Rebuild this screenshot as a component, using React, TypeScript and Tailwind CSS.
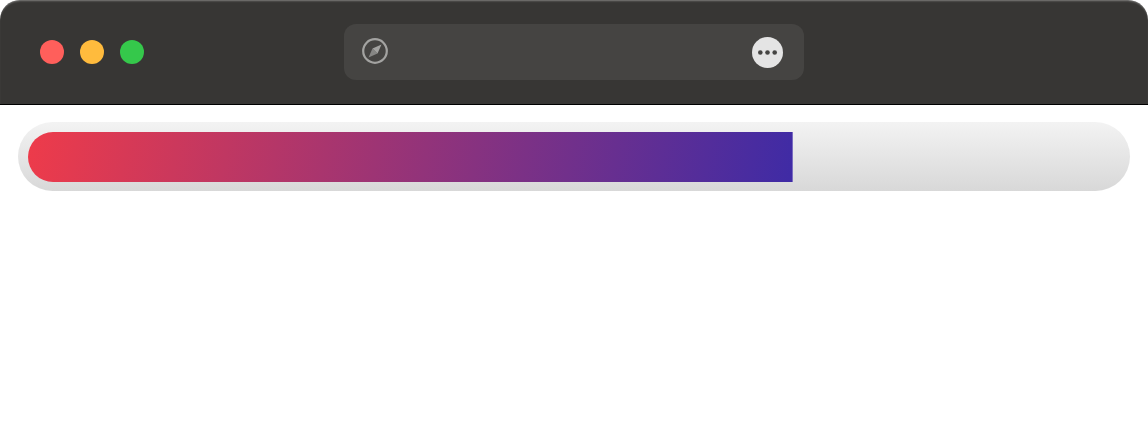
const progress = 70;

const SafariBar = () => {
  return (
    <div className="flex h-[105px] items-center rounded-t-[20px] border-b border-black bg-[#373634] pl-10 shadow-[inset_0_2px_2px_-1px_rgba(255,255,255,0.35)]">
      <div className="flex w-[304px] gap-4">
        <span className="size-6 rounded-full bg-[#ff5f5b]" />
        <span className="size-6 rounded-full bg-[#ffbb3d]" />
        <span className="size-6 rounded-full bg-[#35c84b]" />
      </div>
      <div className="flex h-14 w-[460px] items-center justify-between rounded-xl bg-[#454442] pl-[18px] pr-[21px]">
        <svg className="mb-[2px]" width="26" height="26" viewBox="0 0 26 26" fill="none">
          <circle cx="13" cy="13" r="11.8" stroke="#a3a3a1" strokeWidth="2.2" />
          <path d="M19.5 6.5 L15.5 15.5 L10.5 10.5 Z" fill="#a3a3a1" />
          <path d="M6.5 19.5 L10.5 10.5 L15.5 15.5 Z" fill="#a3a3a1" opacity="0.7" />
        </svg>
        <svg width="31" height="31" viewBox="0 0 31 31">
          <circle cx="15.5" cy="15.5" r="15.5" fill="#e4e4e4" />
          <circle cx="8.3" cy="15.5" r="2.3" fill="#454442" />
          <circle cx="15.5" cy="15.5" r="2.3" fill="#454442" />
          <circle cx="22.7" cy="15.5" r="2.3" fill="#454442" />
        </svg>
      </div>
    </div>
  );
};

const App = () => {
  return (
    <div className="h-[448px] w-[1148px] overflow-hidden bg-white font-['Liberation_Sans',sans-serif]">
      <SafariBar />
      <div className="mx-[18px] mt-[17px] rounded-[35px] bg-gradient-to-b from-[#f3f3f3] to-[#d8d8d8] px-[10px] pb-[9px] pt-[10px]">
        <div
          className="box-content h-[50px] rounded-l-[25px] border-r border-[#7a6cc0] bg-[linear-gradient(100deg,#ee3b4a_0%,#7b3186_65%,#3f2ba5_100%)]"
          style={{ width: `${progress}%` }}
        />
      </div>
    </div>
  );
};

export default App;
